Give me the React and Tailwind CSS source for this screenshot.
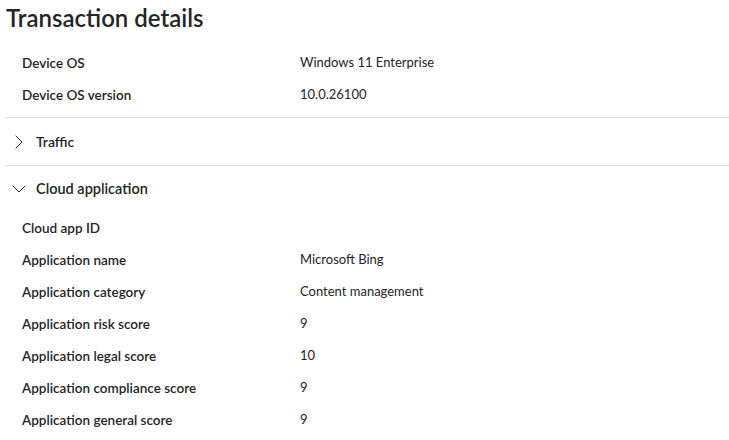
import { ChevronRight, ChevronDown } from 'lucide-react'

const deviceRows = [
  { label: 'Device OS', value: 'Windows 11 Enterprise' },
  { label: 'Device OS version', value: '10.0.26100' }
]

const cloudRows = [
  { label: 'Cloud app ID', value: '' },
  { label: 'Application name', value: 'Microsoft Bing' },
  { label: 'Application category', value: 'Content management' },
  { label: 'Application risk score', value: '9' },
  { label: 'Application legal score', value: '10' },
  { label: 'Application compliance score', value: '9' },
  { label: 'Application general score', value: '9' }
]

const Row = ({ label, value }) => (
  <div className="flex items-center h-8 pl-4">
    <span className="w-[278px] font-semibold text-[13.5px]">{label}</span>
    <span>{value}</span>
  </div>
)

const App = () => {
  return (
    <div
      className="w-[729px] h-[440px] overflow-hidden bg-white text-[#242424] text-[13px] pl-1.5"
      style={{ fontFamily: '"Segoe UI", Lato, "Noto Sans", sans-serif' }}
    >
      <h1 className="text-[24px] font-semibold leading-8 pt-0.5">Transaction details</h1>

      {/* Device */}
      <div className="pt-[13px] pb-[6px]">
        {deviceRows.map(r => <Row key={r.label} {...r} />)}
      </div>

      {/* Traffic */}
      <div className="border-t border-[#e0e0e0] h-12 flex items-center gap-[5px] pl-px">
        <ChevronRight className="w-6 h-6" strokeWidth={1} />
        <span className="font-semibold text-[14px]">Traffic</span>
      </div>

      {/* Cloud application */}
      <div className="border-t border-[#e0e0e0]">
        <div className="h-[46px] flex items-center gap-[5px] pl-px">
          <ChevronDown className="w-6 h-6" strokeWidth={1} />
          <span className="font-semibold text-[14.5px]">Cloud application</span>
        </div>
        <div>
          {cloudRows.map(r => <Row key={r.label} {...r} />)}
        </div>
      </div>
    </div>
  )
}

export default App
